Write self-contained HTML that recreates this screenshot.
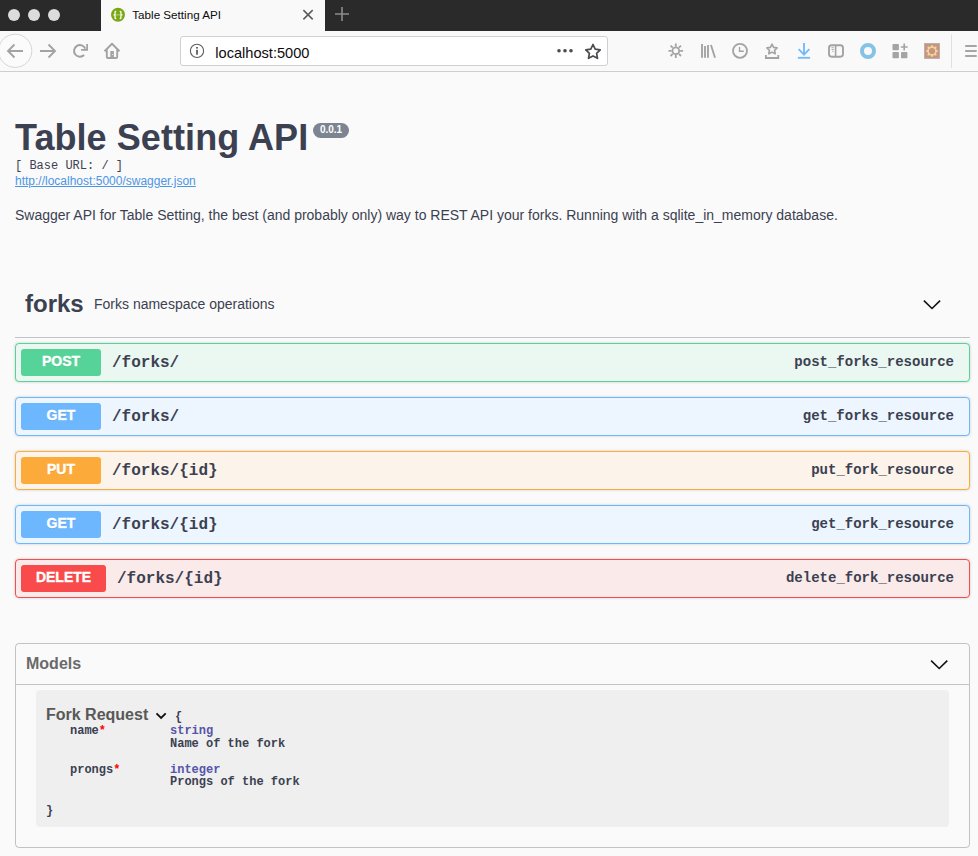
<!DOCTYPE html>
<html><head><meta charset="utf-8">
<style>
*{box-sizing:border-box;margin:0;padding:0}
html,body{width:978px;height:856px;overflow:hidden;background:#fafafa;font-family:"Liberation Sans",sans-serif;color:#3b4151}
.abs{position:absolute}
#tabbar{position:absolute;left:0;top:0;width:978px;height:31px;background:#2a2a2a}
#tab{position:absolute;left:101px;top:0;width:224px;height:31px;background:#f9f9fa}
#toolbar{position:absolute;left:0;top:31px;width:978px;height:41px;background:#f9f9fa;border-bottom:1px solid #cdcfcf}
.dot{position:absolute;top:9px;width:12px;height:12px;border-radius:50%;background:#dcdcdc}
#url{position:absolute;left:180px;top:36px;width:428px;height:30px;background:#fff;border:1px solid #d0d0d4;border-radius:3px}
.mono{font-family:"Liberation Mono",monospace}
.t{position:absolute;white-space:pre;line-height:1}
.op{position:absolute;left:15px;width:955px;height:39px;border:1px solid;border-radius:4px;box-shadow:0 0 3px rgba(0,0,0,.19)}
.op .m{position:absolute;left:5px;top:5px;width:80px;height:27px;border-radius:3px;color:#fff;font:bold 14px "Liberation Sans",sans-serif;text-align:center;line-height:24px;text-shadow:0 1px 0 rgba(0,0,0,.1);-webkit-text-stroke:0.35px #fff}
.op .p{position:absolute;left:96px;top:1px;line-height:37px;font:bold 16px "Liberation Mono",monospace;line-height:37px;color:#3b4151;white-space:pre}
.op .d{position:absolute;right:15px;top:0;font:bold 14px "Liberation Mono",monospace;line-height:37px;color:#3b4151;white-space:pre}
.post{border-color:#56d399;background:#ebf7f1}
.post .m{background:#56d399}
.get{border-color:#6cb7fe;background:#edf5fe}
.get .m{background:#6cb7fe}
.put{border-color:#fcab3a;background:#fcf3ea}
.put .m{background:#fcab3a}
.del{border-color:#f94b4b;background:#fbeaea}
.del .m{background:#f94b4b;width:85px}
</style></head><body>
<!-- browser chrome -->
<div id="tabbar"></div>
<div class="dot" style="left:8px"></div>
<div class="dot" style="left:28px"></div>
<div class="dot" style="left:48px"></div>
<div id="tab"></div>
<div id="toolbar"></div>
<div id="url"></div>
<svg class="abs" style="left:0;top:0" width="978" height="72" viewBox="0 0 978 72">
 <!-- favicon -->
 <circle cx="118" cy="14.8" r="7" fill="#7aa814"/>
 <rect x="115.8" y="13.9" width="4.4" height="1.8" fill="#9cc159"/>
 <path d="M116.3 11.3h-0.6q-0.6 0-0.6 0.6v2.4l-0.9 0.6 0.9 0.6v2.4q0 0.6 0.6 0.6h0.6M119.7 11.3h0.6q0.6 0 0.6 0.6v2.4l0.9 0.6-0.9 0.6v2.4q0 0.6-0.6 0.6h-0.6" fill="none" stroke="#f6faee" stroke-width="1.35"/>
 <!-- close x -->
 <path d="M303.4 10.1l9.3 9.3M312.7 10.1l-9.3 9.3" stroke="#5b5b5f" stroke-width="1.5"/>
 <!-- new tab plus -->
 <path d="M342 7v14M335 14h14" stroke="#8c8c8c" stroke-width="1.6"/>
 <!-- back button circle -->
 <circle cx="15.2" cy="50.8" r="16.6" fill="#fbfbfb" stroke="#d6d6d8" stroke-width="1"/>
 <path d="M8 51h15M14.5 44.5L8 51l6.5 6.5" fill="none" stroke="#a3a3a5" stroke-width="1.9"/>
 <!-- forward -->
 <path d="M40 51h15M48.5 44.5L55 51l-6.5 6.5" fill="none" stroke="#a3a3a5" stroke-width="1.9"/>
 <!-- reload -->
 <path d="M85.3 48.6A5.85 5.85 0 1 0 84.1 55" fill="none" stroke="#a0a0a2" stroke-width="1.95"/>
 <path d="M87.1 44V49.95H81.1" fill="none" stroke="#a0a0a2" stroke-width="1.7"/>
 <!-- home -->
 <path d="M104.5 51.2L112 43.8l7.5 7.4M106.8 49.6v7.4q0 1 1 1h8.4q1 0 1-1v-7.4" fill="none" stroke="#a3a3a5" stroke-width="1.9" stroke-linejoin="round"/>
 <rect x="110.3" y="51" width="3.6" height="6.6" fill="#a3a3a5"/><circle cx="112.4" cy="54.5" r="0.55" fill="#f4f4f4"/>
</svg>
<div class="t" style="left:132.3px;top:8px;font-size:11.65px;line-height:14px;color:#0c0c0d">Table Setting API</div>
<div class="t" style="left:215.3px;top:44.6px;font-size:14.6px;line-height:17px;color:#0c0c0d">localhost:5000</div>
<svg class="abs" style="left:0;top:0" width="978" height="72" viewBox="0 0 978 72">
 <!-- info -->
 <circle cx="197" cy="50.9" r="6.6" fill="none" stroke="#5c5c61" stroke-width="1.1"/>
 <rect x="196.1" y="47" width="1.8" height="1.6" fill="#5c5c61"/>
 <rect x="196.1" y="49.8" width="1.8" height="4.9" fill="#5c5c61"/>
 <!-- dots -->
 <circle cx="559" cy="50.8" r="1.8" fill="#4a4a4f"/><circle cx="565" cy="50.8" r="1.8" fill="#4a4a4f"/><circle cx="571" cy="50.8" r="1.8" fill="#4a4a4f"/>
 <!-- star -->
 <path d="M593 44.5l2.2 4.6 5 .7-3.6 3.5.9 5-4.5-2.4-4.5 2.4.9-5-3.6-3.5 5-.7z" fill="none" stroke="#4a4a4f" stroke-width="1.7" stroke-linejoin="round"/>
 <!-- sun -->
 <g stroke="#a3a3a5" stroke-width="1.8" fill="none">
  <circle cx="675.8" cy="50.8" r="3.4"/>
  <path d="M675.8 43.5v3M675.8 55.1v3M668.5 50.8h3M680.1 50.8h3M670.6 45.6l2.1 2.1M678.9 53.9l2.1 2.1M670.6 56l2.1-2.1M678.9 47.7l2.1-2.1"/>
 </g>
 <!-- library -->
 <path d="M702 44v13.8M705 46v11.8M708 44.9v12.9M711 44.9l4 12.9" stroke="#a2a2a4" stroke-width="1.85" fill="none"/>
 <!-- clock -->
 <circle cx="740" cy="50.8" r="7" fill="none" stroke="#a3a3a5" stroke-width="1.8"/>
 <path d="M739.5 47v4.2h4.3" fill="none" stroke="#a3a3a5" stroke-width="1.35"/>
 <!-- bookmarks tray -->
 <path d="M772 44.2l1.6 3.2 3.5.5-2.5 2.4.6 3.5-3.2-1.7-3.2 1.7.6-3.5-2.5-2.4 3.5-.5z" fill="none" stroke="#a3a3a5" stroke-width="1.6" stroke-linejoin="round"/>
 <path d="M765.9 55v3h12.4v-3" fill="none" stroke="#a3a3a5" stroke-width="1.8"/>
 <!-- download -->
 <path d="M804 43v11.5M798.6 49.2l5.4 5.4 5.4-5.4" fill="none" stroke="#74bbf9" stroke-width="1.9"/>
 <path d="M797.8 57.8h12.3" stroke="#74bbf9" stroke-width="1.8"/>
 <!-- sidebar -->
 <rect x="829" y="45.3" width="14" height="11.4" rx="2.6" fill="none" stroke="#a3a3a5" stroke-width="1.9"/>
 <path d="M835.6 45.3v11.4" stroke="#a3a3a5" stroke-width="1.6"/>
 <path d="M831.5 47.7h2.2M831.5 49.5h2.2M832.2 51.3h1.5" stroke="#a3a3a5" stroke-width="0.9"/>
 <!-- ring -->
 <circle cx="868" cy="51" r="6" fill="none" stroke="#84c2e6" stroke-width="4"/>
 <!-- grid plus -->
 <g fill="#a4a4a6">
  <rect x="892.5" y="44" width="6.4" height="6.2" rx="0.8"/>
  <rect x="892.5" y="52" width="6.4" height="6.2" rx="0.8"/>
  <rect x="901" y="52" width="6.4" height="6.2" rx="0.8"/>
 </g>
 <path d="M904.2 43.6v6.8M900.8 47h6.8" stroke="#a4a4a6" stroke-width="1.6"/>
 <!-- brown theme -->
 <rect x="924.6" y="43.5" width="14.9" height="14.9" fill="#c8937f" stroke="#b5a9ad" stroke-width="0.8"/>
 <polygon points="932.00,45.00 933.57,47.21 936.24,46.76 935.79,49.43 938.00,51.00 935.79,52.57 936.24,55.24 933.57,54.79 932.00,57.00 930.43,54.79 927.76,55.24 928.21,52.57 926.00,51.00 928.21,49.43 927.76,46.76 930.43,47.21" fill="#efd79c" stroke="#efd79c" stroke-width="0.6" stroke-linejoin="round"/>
 <circle cx="932" cy="51" r="3.1" fill="#c8937f"/>
 <!-- separator -->
 <path d="M951.5 34.3v33.6" stroke="#e0e0e1" stroke-width="1"/>
 <!-- hamburger -->
 <path d="M965.9 46h10.1M965.9 51h10.1M965.9 56h10.1" stroke="#a5a5a7" stroke-width="1.9" stroke-linecap="round"/>
</svg>
<!-- page -->
<div class="t" style="left:15px;top:120px;font-size:36px;font-weight:bold;letter-spacing:0.07px">Table Setting API</div>
<div class="t" style="left:313px;top:123px;width:36px;height:15px;border-radius:57px;background:#7d8492;color:#fff;font-size:10px;font-weight:bold;line-height:14px;text-align:center">0.0.1</div>
<div class="t mono" style="left:15px;top:160px;font-size:12px">[ Base URL: / ]</div>
<div class="t" style="left:15px;top:175px;font-size:12px;color:#4d95e5;text-decoration:underline">http://localhost:5000/swagger.json</div>
<div class="t" style="left:15px;top:208px;font-size:14px">Swagger API for Table Setting, the best (and probably only) way to REST API your forks. Running with a sqlite_in_memory database.</div>

<div class="t" style="left:25px;top:292px;font-size:24px;font-weight:bold">forks</div>
<div class="t" style="left:94px;top:297px;font-size:14px">Forks namespace operations</div>
<div class="abs" style="left:15px;top:337px;width:955px;height:1px;background:rgba(59,65,81,.3)"></div>

<div class="op post" style="top:343px"><div class="m">POST</div><div class="p">/forks/</div><div class="d">post_forks_resource</div></div>
<div class="op get" style="top:397px"><div class="m">GET</div><div class="p">/forks/</div><div class="d">get_forks_resource</div></div>
<div class="op put" style="top:451px"><div class="m">PUT</div><div class="p">/forks/{id}</div><div class="d">put_fork_resource</div></div>
<div class="op get" style="top:505px"><div class="m">GET</div><div class="p">/forks/{id}</div><div class="d">get_fork_resource</div></div>
<div class="op del" style="top:559px"><div class="m">DELETE</div><div class="p" style="left:101px">/forks/{id}</div><div class="d">delete_fork_resource</div></div>

<div class="abs" style="left:15px;top:643px;width:955px;height:205px;border:1px solid rgba(59,65,81,.3);border-radius:4px"></div>
<div class="abs" style="left:16px;top:684px;width:953px;height:1px;background:rgba(59,65,81,.3)"></div>
<div class="t" style="left:26px;top:656px;font-size:16px;font-weight:bold;color:#6a6a6a">Models</div>
<svg class="abs" style="left:0;top:280px" width="978" height="400" viewBox="0 280 978 400">
 <path d="M923.9 300.6l8.1 7.9 8.1-7.9" fill="none" stroke="#111" stroke-width="1.6"/>
 <path d="M931.1 660.6l8.1 7.9 8.1-7.9" fill="none" stroke="#111" stroke-width="1.6"/>
</svg>
<div class="abs" style="left:36px;top:690px;width:913px;height:137px;background:rgba(0,0,0,.045);border-radius:4px"></div>
<div class="t" style="left:46px;top:707px;font-size:16px;font-weight:bold;color:#585858">Fork Request</div>
<svg class="abs" style="left:150px;top:705px" width="20" height="20" viewBox="150 705 20 20">
 <path d="M156.5 713.3l4.6 4.6 4.6-4.6" fill="none" stroke="#111" stroke-width="1.9"/>
</svg>
<div class="t mono" style="left:175px;top:711px;font-size:12px;font-weight:bold;color:#3b4151">{</div>
<div class="t mono" style="left:70px;top:725px;font-size:12px;font-weight:bold;color:#3b4151">name<span style="color:#f00">*</span></div>
<div class="t mono" style="left:170px;top:725px;font-size:12px;font-weight:bold;color:#55a">string</div>
<div class="t mono" style="left:170px;top:738px;font-size:12px;font-weight:bold;color:#3b4151">Name of the fork</div>
<div class="t mono" style="left:70px;top:764px;font-size:12px;font-weight:bold;color:#3b4151">prongs<span style="color:#f00">*</span></div>
<div class="t mono" style="left:170px;top:764px;font-size:12px;font-weight:bold;color:#55a">integer</div>
<div class="t mono" style="left:170px;top:776px;font-size:12px;font-weight:bold;color:#3b4151">Prongs of the fork</div>
<div class="t mono" style="left:46px;top:805px;font-size:12px;font-weight:bold;color:#3b4151">}</div>
</body></html>
